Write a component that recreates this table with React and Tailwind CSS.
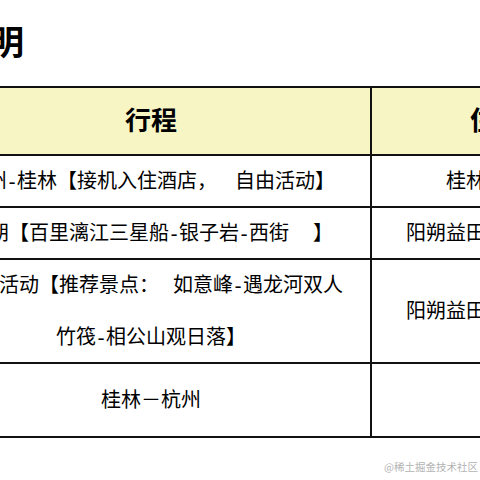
import React from "react";

// half-width hyphen like the Song font in the original doc
const H = () => <span className="inline-block w-[10px] text-center">-</span>;
const Gap = ({ w = "w-[14px]" }) => <span className={`inline-block ${w}`} />;

const rows = [
  {
    left: (
      <>
        杭州<H />桂林【接机入住酒店，<Gap w="w-[18px]" />自由活动】
      </>
    ),
    right: "桂林市酒店",
    h: "h-[52px]",
  },
  {
    left: (
      <>
        阳朔【百里漓江三星船<H />银子岩<H />西街<Gap w="w-[24px]" />】
      </>
    ),
    right: "阳朔益田西街大酒店",
    h: "h-[52px]",
  },
  {
    left: (
      <>
        自由活动【推荐景点：<Gap />如意峰<H />遇龙河双人
        <br />
        竹筏<H />相公山观日落】
      </>
    ),
    right: "阳朔益田西街大酒店",
    h: "h-[104px]",
  },
  { left: "桂林－杭州", right: "", h: "h-[74px]" },
];

export default function App() {
  return (
    <div className="w-[480px] h-[480px] overflow-hidden bg-white text-black font-['Liberation_Serif','Noto_Sans_CJK_SC',serif]">
      {/* Title */}
      <div className="h-[86px] flex items-center">
        <div className="ml-[-122px] w-[146px] text-right text-[34px] font-bold whitespace-nowrap">
          行程说明
        </div>
      </div>

      {/* Table */}
      <div className="ml-[-68px] w-[688px] border-t-2 border-[#111]">
        <div className="flex h-[68px] bg-[#f8f5c5] border-b-2 border-[#111] font-bold text-[26px]">
          <div className="w-[440px] border-r-2 border-[#111] flex items-center justify-center">
            行程
          </div>
          <div className="w-[248px] flex items-center justify-center">住宿</div>
        </div>
        {rows.map((r, i) => (
          <div key={i} className={`flex ${r.h} border-b-2 border-[#111] text-[20px]`}>
            <div className="w-[440px] border-r-2 border-[#111] flex items-center justify-center text-center leading-[52px] whitespace-nowrap">
              <div>{r.left}</div>
            </div>
            <div className="w-[248px] flex items-center justify-center whitespace-nowrap">
              {r.right}
            </div>
          </div>
        ))}
      </div>

      {/* Watermark */}
      <div className="mt-[22px] flex justify-end pr-[2px] text-[10.5px] leading-[14px] text-[#b3b3b3] font-['Noto_Sans_CJK_SC',sans-serif]">
        @稀土掘金技术社区
      </div>
    </div>
  );
}
